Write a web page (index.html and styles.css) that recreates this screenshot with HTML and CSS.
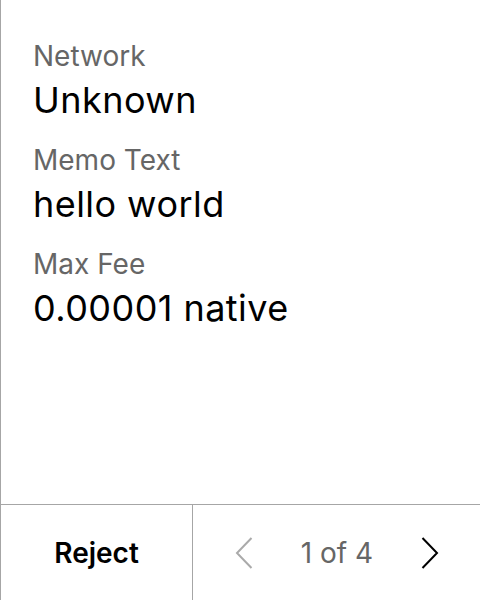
FILE: index.html
```html
<!DOCTYPE html>
<html>
<head><link rel="stylesheet" href="styles.css"></head>
<body>
<div class="screen">
  <div class="content">
    <div class="field">
      <div class="label">Network</div>
      <div class="value">Unknown</div>
    </div>
    <div class="field">
      <div class="label">Memo Text</div>
      <div class="value">hello world</div>
    </div>
    <div class="field">
      <div class="label">Max Fee</div>
      <div class="value">0.00001 native</div>
    </div>
  </div>
  <div class="footer">
    <div class="reject">Reject</div>
    <div class="pager">
      <svg class="chev prev" width="18" height="32" viewBox="0 0 18 32"><path d="M16.5 1 L2 16 L16.5 31" fill="none" stroke="currentColor" stroke-width="2"/></svg>
      <span class="count">1 of 4</span>
      <svg class="chev next" width="18" height="32" viewBox="0 0 18 32"><path d="M1.5 1 L16 16 L1.5 31" fill="none" stroke="currentColor" stroke-width="2"/></svg>
    </div>
  </div>
</div>
</body>
</html>
```
FILE: styles.css
```css
html, body { margin: 0; padding: 0; background: #fff; }
body { font-family: Inter, "Noto Sans", sans-serif; }
.screen {
  width: 480px; height: 600px; box-sizing: border-box;
  border-left: 1px solid #a6a6a6;
  display: flex; flex-direction: column;
}
.content { flex: 1; padding: 38px 0 0 32px; display: flex; flex-direction: column; gap: 20px; }
.field { display: flex; flex-direction: column; gap: 4px; }
.label { font-size: 28px; line-height: 36px; color: #666; }
.value { font-size: 36px; line-height: 44px; color: #000; letter-spacing: 0.45px; }
.footer { height: 96px; border-top: 1px solid #a6a6a6; display: flex; box-sizing: border-box; }
.reject { width: 191px; border-right: 1px solid #a6a6a6; display: flex; align-items: center; justify-content: center; font-size: 28px; font-weight: 600; color: #000; }
.pager { flex: 1; display: flex; align-items: center; justify-content: space-between; padding: 0 41px 0 42px; }
.count { font-size: 28px; color: #666; }
.chev.prev { color: #aaa; }
.chev.next { color: #000; }
```
